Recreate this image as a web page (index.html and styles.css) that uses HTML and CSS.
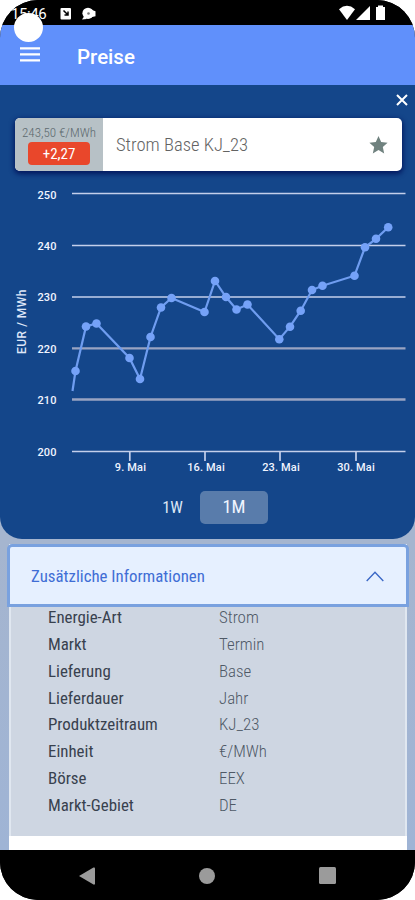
FILE: index.html
```html
<!DOCTYPE html>
<html lang="de">
<head>
<meta charset="utf-8">
<title>Preise</title>
<link rel="stylesheet" href="styles.css">
</head>
<body>
<div class="phone">
  <header class="status">
    <span class="clock">15:46</span>
    <svg class="notif" width="37" height="14" viewBox="0 0 37 14">
      <rect x="0.5" y="1" width="10.5" height="11.5" rx="1" fill="#fff"/>
      <path d="M3.500 3.500L7.800 7.800M8 4.500V8H4.500" fill="none" stroke="#000" stroke-width="1.500"/>
      <circle cx="28" cy="6.300" r="5.600" fill="#fff"/>
      <path d="M22 12.500l2-3 3 2.500zM32 3l3.500 1.200v5L32 10z" fill="#fff"/>
      <circle cx="28.500" cy="6.500" r="1.300" fill="#777"/>
    </svg>
    <svg class="signal" width="48" height="16" viewBox="0 0 48 16">
      <path d="M0 4.200Q8 -2.700 16 4.200L8 15z" fill="#fff"/>
      <path d="M31 1v14H17z" fill="#fff"/>
      <path d="M37 2h2V.500h5V2h2v13h-9z" fill="#fff"/>
    </svg>
    <i class="camera"></i>
  </header>
  <nav class="bar">
    <svg width="20" height="15" viewBox="0 0 20 15"><path d="M0 1.300h20M0 7.300h20M0 13.300h20" stroke="#fff" stroke-width="2.200"/></svg>
    <h1>Preise</h1>
  </nav>
  <main class="content">
    <section class="panel">
      <div class="close"><svg width="12" height="12" viewBox="0 0 12 12"><path d="M1 1l10 10M11 1L1 11" stroke="#fff" stroke-width="2"/></svg></div>
      <div class="card">
        <div class="quote">
          <span class="price">243,50 €/MWh</span>
          <span class="delta">+2,27</span>
        </div>
        <span class="name">Strom Base KJ_23</span>
        <svg class="star" width="19" height="18" viewBox="0 0 19 18"><path d="M9.500 0l2.700 6 6.400.700-4.800 4.300 1.400 6.400-5.700-3.300-5.700 3.300L5.200 11 .400 6.700l6.400-.700z" fill="#70827f"/></svg>
      </div>
      <svg class="chart" width="415" height="300" viewBox="0 180 415 300">
        <path class="grid" d="M72 193.500H405.500M72 245.500H405.500M72 297H405.500M72 451.500H405.500M129.800 452v9M205 452v9M280 452v9M356 452v9"/>
        <path class="grid soft" d="M72 348.400H405.500M72 399.500H405.500"/>
        <path class="line" d="M72.500 391L75.500 371L86 326.500L96.500 323.500L129.500 358L140 379L150.500 337L161 307.500L171.500 298L204.500 312L215 281L226 297L236.500 309.500L247.500 304.500L279.300 339.200L290 326.700L300.700 310.700L312 290L322.500 285.700L354.500 275.700L365 247.300L376 238.800L388.200 227.300"/>
        <g class="dots">
          <circle cx="75.500" cy="371" r="4.300"/><circle cx="86" cy="326.500" r="4.300"/><circle cx="96.500" cy="323.500" r="4.300"/><circle cx="129.500" cy="358" r="4.300"/><circle cx="140" cy="379" r="4.300"/><circle cx="150.500" cy="337" r="4.300"/><circle cx="161" cy="307.500" r="4.300"/><circle cx="171.500" cy="298" r="4.300"/><circle cx="204.500" cy="312" r="4.300"/><circle cx="215" cy="281" r="4.300"/><circle cx="226" cy="297" r="4.300"/><circle cx="236.500" cy="309.500" r="4.300"/><circle cx="247.500" cy="304.500" r="4.300"/><circle cx="279.300" cy="339.200" r="4.300"/><circle cx="290" cy="326.700" r="4.300"/><circle cx="300.700" cy="310.700" r="4.300"/><circle cx="312" cy="290" r="4.300"/><circle cx="322.500" cy="285.700" r="4.300"/><circle cx="354.500" cy="275.700" r="4.300"/><circle cx="365" cy="247.300" r="4.300"/><circle cx="376" cy="238.800" r="4.300"/><circle cx="388.200" cy="227.300" r="4.300"/>
        </g>
        <g class="ticks">
          <text x="47" y="199">250</text><text x="47" y="249.500">240</text><text x="47" y="301">230</text><text x="47" y="352.500">220</text><text x="47" y="404">210</text><text x="47" y="455.700">200</text>
          <text x="130.500" y="470.500">9. Mai</text><text x="206" y="470.500">16. Mai</text><text x="281" y="470.500">23. Mai</text><text x="356" y="470.500">30. Mai</text>
        </g>
        <text class="unit" transform="translate(26 321.500) rotate(-90)">EUR / MWh</text>
      </svg>
      <div class="range"><button>1W</button><button class="on">1M</button></div>
    </section>
    <section class="info">
      <div class="info-head"><span>Zusätzliche Informationen</span>
        <svg width="18" height="11" viewBox="0 0 18 11"><path d="M.700 10L9 1.300L17.300 10" fill="none" stroke="#3b68c6" stroke-width="1.400"/></svg>
      </div>
      <dl class="facts">
        <dt>Energie-Art</dt><dd>Strom</dd>
        <dt>Markt</dt><dd>Termin</dd>
        <dt>Lieferung</dt><dd>Base</dd>
        <dt>Lieferdauer</dt><dd>Jahr</dd>
        <dt>Produktzeitraum</dt><dd>KJ_23</dd>
        <dt>Einheit</dt><dd>€/MWh</dd>
        <dt>Börse</dt><dd>EEX</dd>
        <dt>Markt-Gebiet</dt><dd>DE</dd>
      </dl>
    </section>
  </main>
  <footer class="keys">
    <svg width="16" height="18" viewBox="0 0 16 18"><path d="M0 9L14.500.500Q16 0 16 1.500v15Q16 18 14.500 17.500z" fill="#9b9b9b"/></svg>
    <svg width="16" height="16" viewBox="0 0 16 16"><circle cx="8" cy="8" r="8" fill="#9b9b9b"/></svg>
    <svg width="17" height="17" viewBox="0 0 17 17"><rect width="17" height="17" rx="1.500" fill="#9b9b9b"/></svg>
  </footer>
</div>
</body>
</html>
```
FILE: styles.css
```css
* { box-sizing: border-box; }
body { margin: 0; background: #fff; font-family: "Roboto Condensed", Roboto, sans-serif; font-stretch: 75%; }
.phone { width: 415px; height: 900px; display: flex; flex-direction: column; overflow: hidden; background: #000; border-radius: 38px; }
.status { position: relative; height: 25px; flex: none; display: flex; align-items: flex-start; background: #000; color: #fff; padding: 6px 28px 0 11px; }
.clock { width: 49px; font: 400 15px/16px Roboto, sans-serif; font-stretch: 100%; letter-spacing: -.4px; }
.notif { margin-top: 1px; }
.signal { margin-left: auto; margin-top: -1px; }
.camera { position: absolute; left: 14px; top: 13px; width: 29px; height: 29px; border-radius: 50%; background: #fff; }
.bar { height: 60px; flex: none; display: flex; align-items: center; gap: 37px; padding: 0 20px; background: #6090fb; color: #fff; }
.bar svg { margin-top: -1px; }
.bar h1 { margin: 3px 0 0; font: 500 20.5px/24px Roboto, sans-serif; font-stretch: 100%; }
.content { height: 765px; flex: none; overflow: hidden; background: linear-gradient(#a5b5cf, #a5b5cf 60%, #9fb4d5); }
.panel { height: 454px; background: #14468a; border-radius: 0 0 22px 22px; display: flex; flex-direction: column; }
.close { height: 33px; padding: 9px 7px 0; display: flex; justify-content: flex-end; }
.card { height: 53px; flex: none; margin: 0 13px 0 15px; display: flex; align-items: center; background: #fff; border-radius: 5px; overflow: hidden; box-shadow: 0 2px 5px 1px #03185f; }
.quote { width: 88px; height: 53px; padding-top: 6px; background: #b7c1c6; display: flex; flex-direction: column; align-items: center; }
.price { font-size: 13px; line-height: 17px; font-weight: 300; color: #5d696e; white-space: nowrap; }
.delta { width: 62px; height: 23px; margin-top: 1px; border-radius: 4px; background: #e9472b; color: #fff; font-size: 15px; line-height: 24px; text-align: center; }
.name { margin-left: 13px; font-size: 18.6px; font-weight: 300; color: #636363; white-space: nowrap; }
.star { margin-left: auto; margin-right: 14px; }
.chart { flex: none; margin-top: 9px; display: block; }
.grid { fill: none; stroke: #c4cfeb; stroke-width: 1.7; }
.soft { stroke: #99a4c2; stroke-width: 2.3; }
.line { fill: none; stroke: #6f9df0; stroke-width: 2.2; }
.dots { fill: #75a2f8; }
.ticks { font: 500 11px Roboto, sans-serif; font-stretch: 100%; letter-spacing: .15px; fill: #f0f4ff; text-anchor: middle; }
.unit { font: 500 12px Roboto, sans-serif; font-stretch: 100%; letter-spacing: .5px; fill: #dfe7f8; text-anchor: middle; }
.range { display: flex; margin: 11px 0 0 145px; }
.range button { width: 55px; height: 33px; padding: 0; border: 0; border-radius: 5px; background: none; color: #dce6f5; font: 400 16.5px/33px "Roboto Condensed", Roboto, sans-serif; font-stretch: 75%; }
.range .on { width: 68px; background: #597cab; color: #f0f5ff; font-size: 18.5px; }
.info { margin: 5px 6px 0 7px; height: 310px; background: linear-gradient(#fff, #fff) 2px 0 / calc(100% - 4px) 100% no-repeat; }
.info-head { height: 63px; padding: 1px 22px 0 21px; display: flex; align-items: center; justify-content: space-between; background: #e6f0ff; border: 3px solid #79a1df; border-radius: 5px 5px 0 0; color: #3f6dd5; font-size: 16.85px; font-weight: 400; }
.facts { margin: 0 2px; height: 229px; padding-left: 37px; display: grid; grid-template-columns: 171px 1fr; grid-auto-rows: 26.85px; align-content: start; line-height: 21px; background: #ced6e2; border: solid #e0e7f0; border-width: 0 2px; font-size: 16.9px; font-weight: 400; color: #38414e; }
.facts dd { margin: 0; font-weight: 300; color: #4f5966; }
.keys { height: 50px; flex: none; display: flex; align-items: center; justify-content: space-between; padding: 1px 79px 0; background: #000; }
```
